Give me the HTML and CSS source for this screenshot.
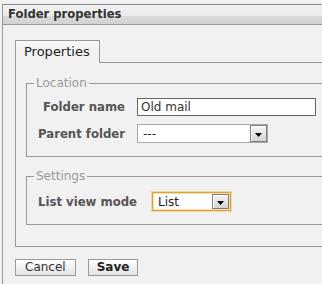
FILE: index.html
```html
<!DOCTYPE html>
<html>
<head>
<meta charset="utf-8">
<link rel="stylesheet" href="styles.css">
</head>
<body>
<div class="dialog">
  <div class="header"><span class="title">Folder properties</span></div>
  <div class="content">
    <div class="tabstrip">
      <div class="tab">Properties</div>
      <div class="tabfill"></div>
    </div>
    <div class="panel">
      <fieldset class="group group-location">
        <legend>Location</legend>
        <div class="form form-location">
          <label class="lbl">Folder name</label>
          <input class="text" type="text" value="Old mail">
          <label class="lbl">Parent folder</label>
          <div class="select select-parent"><span class="sel-text">---</span><span class="arrow"><svg width="7" height="4" viewBox="0 0 7 4"><path d="M0 0h7L3.5 4z" fill="#000"/></svg></span></div>
        </div>
      </fieldset>
      <fieldset class="group group-settings">
        <legend>Settings</legend>
        <div class="form form-settings">
          <label class="lbl">List view mode</label>
          <div class="select select-list"><span class="sel-text">List</span><span class="arrow"><svg width="7" height="4" viewBox="0 0 7 4"><path d="M0 0h7L3.5 4z" fill="#000"/></svg></span></div>
        </div>
      </fieldset>
    </div>
    <div class="buttons">
      <button class="btn">Cancel</button>
      <button class="btn btn-main">Save</button>
    </div>
  </div>
</div>
</body>
</html>
```

FILE: styles.css
```css
html, body {
  margin: 0;
  height: 100%;
}
body {
  background: #f1f1f1;
  overflow: hidden;
  font-family: "DejaVu Sans", Verdana, sans-serif;
}
.dialog {
  box-sizing: border-box;
  margin: 4px 0 0 2px;
  width: 420px;
  height: calc(100vh - 4px);
  border-top: 1px solid #8a8a8a;
  border-left: 1px solid #999;
}
.header {
  height: 19px;
  border-bottom: 1px solid #999;
  background: linear-gradient(#f0f0f0 0, #ebebeb 55%, #dadada 60%, #d2d2d2 100%);
}
.title {
  display: block;
  padding-left: 5px;
  font-weight: bold;
  font-size: 11.6px;
  line-height: 19px;
  color: #333;
}
.content {
  padding: 15px 0 0 12px;
}
.tabstrip {
  display: flex;
}
.tab {
  height: 22px;
  padding: 0 9px 0 8px;
  border: 1px solid #999;
  border-bottom: 0;
  font-size: 13px;
  line-height: 22px;
  color: #222;
  background: linear-gradient(#f7f7f7, #f1f1f1 60%);
}
.tabfill {
  flex: 1;
  border-bottom: 1px solid #999;
}
.panel {
  border: 1px solid #999;
  border-top: 0;
  padding: 13px 10px 21px 10px;
}
.group {
  margin: 0;
  padding: 8px 0 13px 7px;
  border: 1px solid #999;
  min-width: 0;
}
.group-settings {
  margin-top: 12px;
  padding-top: 9px;
}
legend {
  padding: 0 2px;
  font-size: 12px;
  line-height: 14px;
  color: #9a9a9a;
}
.form {
  display: grid;
  grid-template-columns: auto auto;
  justify-content: start;
  align-items: center;
  row-gap: 8px;
  margin-left: 4px;
}
.form-location {
  column-gap: 12px;
}
.form-settings {
  column-gap: 15px;
}
.lbl {
  font-weight: bold;
  font-size: 11.7px;
  color: #575555;
  text-align: right;
}
.text {
  box-sizing: border-box;
  width: 179px;
  height: 18px;
  margin: 0;
  padding: 0 3px;
  border: 1px solid #666;
  background: #fff;
  font: 12px "DejaVu Sans", Verdana, sans-serif;
  color: #333;
  outline: none;
}
.select {
  box-sizing: border-box;
  height: 19px;
  display: flex;
  align-items: center;
  justify-content: space-between;
  padding-left: 5px;
  background: #fff;
  font-size: 12px;
  color: #222;
}
.select-parent {
  width: 131px;
  border: 1px solid #a9a9a9;
}
.select-list {
  width: 79px;
  border: 1px solid #d7a548;
  box-shadow: 0 0 0 1px #f2d9a4, inset 0 0 0 1px #f6dca0;
  padding-right: 1px;
}
.arrow {
  box-sizing: border-box;
  width: 17px;
  height: 17px;
  display: flex;
  align-items: center;
  justify-content: center;
  padding-top: 2px;
  border: 1px solid #7f7f7f;
  box-shadow: inset 1px 1px 0 #fff;
  background: linear-gradient(#f6f6f6, #d3d3d3);
}
.select-list .arrow {
  height: 15px;
}
.buttons {
  display: flex;
  gap: 12px;
  margin-top: 12px;
}
.btn {
  box-sizing: border-box;
  height: 17px;
  margin: 0;
  padding: 0 9px;
  border: 1px solid #9a9a9a;
  background: linear-gradient(#ffffff, #e3e3e3);
  font: 12px "DejaVu Sans", Verdana, sans-serif;
  line-height: 15px;
  color: #333;
}
.btn-main {
  padding: 0 8px;
  font-weight: bold;
  color: #222;
}
```
